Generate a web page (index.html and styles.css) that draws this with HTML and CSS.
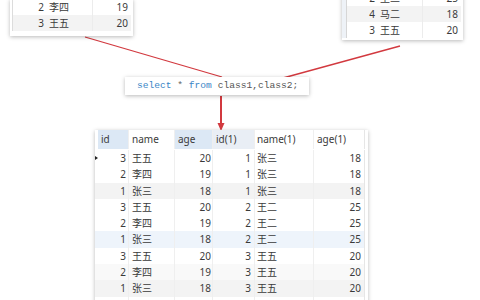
FILE: index.html
```html
<!DOCTYPE html>
<html lang="zh">
<head>
<meta charset="utf-8">
<title>class1, class2 cross join</title>
<link rel="stylesheet" href="styles.css">
</head>
<body>
<div class="canvas">
  <svg class="wires" width="480" height="300" viewBox="0 0 480 300">
    <line x1="85" y1="37" x2="222" y2="77" class="wire"/>
    <line x1="400" y1="46" x2="283" y2="78" class="wire"/>
    <line x1="221" y1="96" x2="221" y2="124" class="wire thick"/>
    <polygon points="217.5,123 224.5,123 221,131" class="head"/>
  </svg>

  <div class="card card-left">
    <div class="mini mini-left">
      <div class="m-row"><span class="c-id">2</span><span class="c-name">李四</span><span class="c-age">19</span></div>
      <div class="m-row alt"><span class="c-id">3</span><span class="c-name">王五</span><span class="c-age">20</span></div>
    </div>
  </div>

  <div class="card card-right">
    <div class="mini mini-right">
      <div class="m-row"><span class="strip"></span><span class="c-id">2</span><span class="c-name">王二</span><span class="c-age">25</span></div>
      <div class="m-row alt"><span class="strip"></span><span class="c-id">4</span><span class="c-name">马二</span><span class="c-age">18</span></div>
      <div class="m-row"><span class="strip"></span><span class="c-id">3</span><span class="c-name">王五</span><span class="c-age">20</span></div>
    </div>
  </div>

  <div class="sql"><span class="kw">select</span> <span class="op">*</span> <span class="kw">from</span> class1,class2;</div>

  <div class="card card-result">
    <div class="grid">
      <div class="g-row head-row">
        <span class="strip"></span>
        <span class="h h-sel">id</span>
        <span class="h">name</span>
        <span class="h h-sel">age</span>
        <span class="h h-soft">id(1)</span>
        <span class="h">name(1)</span>
        <span class="h">age(1)</span>
      </div>
      <div class="g-row"><span class="strip"><i class="ptr"></i></span><span class="num">3</span><span class="txt">王五</span><span class="num n-age">20</span><span class="num">1</span><span class="txt">张三</span><span class="num">18</span></div>
      <div class="g-row"><span class="strip"></span><span class="num">2</span><span class="txt">李四</span><span class="num n-age">19</span><span class="num">1</span><span class="txt">张三</span><span class="num">18</span></div>
      <div class="g-row alt"><span class="strip"></span><span class="num">1</span><span class="txt">张三</span><span class="num n-age">18</span><span class="num">1</span><span class="txt">张三</span><span class="num">18</span></div>
      <div class="g-row"><span class="strip"></span><span class="num">3</span><span class="txt">王五</span><span class="num n-age">20</span><span class="num">2</span><span class="txt">王二</span><span class="num">25</span></div>
      <div class="g-row"><span class="strip"></span><span class="num">2</span><span class="txt">李四</span><span class="num n-age">19</span><span class="num">2</span><span class="txt">王二</span><span class="num">25</span></div>
      <div class="g-row sel"><span class="strip"></span><span class="num">1</span><span class="txt">张三</span><span class="num n-age">18</span><span class="num">2</span><span class="txt">王二</span><span class="num">25</span></div>
      <div class="g-row"><span class="strip"></span><span class="num">3</span><span class="txt">王五</span><span class="num n-age">20</span><span class="num">3</span><span class="txt">王五</span><span class="num">20</span></div>
      <div class="g-row faint"><span class="strip"></span><span class="num">2</span><span class="txt">李四</span><span class="num n-age">19</span><span class="num">3</span><span class="txt">王五</span><span class="num">20</span></div>
      <div class="g-row alt"><span class="strip"></span><span class="num">1</span><span class="txt">张三</span><span class="num n-age">18</span><span class="num">3</span><span class="txt">王五</span><span class="num">20</span></div>
      <div class="g-row"><span class="strip"></span><span class="num"></span><span class="txt"></span><span class="num n-age"></span><span class="num"></span><span class="txt"></span><span class="num"></span></div>
    </div>
  </div>
</div>
</body>
</html>
```

FILE: styles.css
```css
* { box-sizing: border-box; }

html, body {
  margin: 0;
  padding: 0;
  background: #ffffff;
}

.canvas {
  position: relative;
  width: 480px;
  height: 300px;
  overflow: hidden;
  background: #ffffff;
  font-family: "Noto Sans", "Noto Sans CJK SC", sans-serif;
  font-size: 10px;
  color: #3a3a3a;
}

.wires {
  position: absolute;
  left: 0;
  top: 0;
}

.wire {
  stroke: #d2393f;
  stroke-width: 1.3;
}

.wire.thick {
  stroke-width: 2;
}

.head {
  fill: #d2393f;
}

.card {
  position: absolute;
  background: #ffffff;
  box-shadow: 0 1px 4px rgba(0, 0, 0, 0.28);
}

/* small source tables */
.card-left {
  left: 10px;
  top: -1px;
  width: 123px;
  padding: 0 2px 5px 2px;
}

.card-right {
  left: 342px;
  top: -10px;
  width: 121px;
  padding: 0 2px 2px 0;
}

.mini {
  display: flex;
  flex-direction: column;
}

.mini-left {
  border-left: 1px solid #dcdcdc;
}

.m-row {
  display: grid;
  height: 16px;
  line-height: 16px;
  white-space: nowrap;
}

.mini-left .m-row {
  grid-template-columns: 33px 47px 38px;
}

.mini-right .m-row {
  grid-template-columns: 5px 30px 46px 38px;
}

.m-row.alt {
  background: #f3f3f3;
}

.m-row .strip {
  background: #eef2f7;
  border-right: 1px solid #d6d6d6;
}

.c-id {
  text-align: right;
  padding-right: 2px;
}

.c-name {
  padding-left: 3px;
  border-right: 1px solid #ececec;
}

.c-age {
  text-align: right;
  padding-right: 3px;
}

/* sql statement */
.sql {
  position: absolute;
  left: 125px;
  top: 77px;
  width: 184px;
  height: 18px;
  line-height: 18px;
  padding-left: 12px;
  background: #ffffff;
  box-shadow: 0 1px 4px rgba(0, 0, 0, 0.28);
  font-family: "Liberation Mono", "DejaVu Sans Mono", monospace;
  font-size: 9.6px;
  color: #555555;
  white-space: pre;
}

.sql .kw {
  color: #3a85c6;
}

.sql .op {
  color: #666666;
}

/* result grid */
.card-result {
  left: 95px;
  top: 130px;
  width: 273px;
  padding-right: 3px;
}

.grid {
  display: flex;
  flex-direction: column;
}

.g-row {
  display: grid;
  grid-template-columns: 3px 31px 46px 38px 42px 59px 51px;
  height: 16.3px;
  line-height: 16.3px;
  white-space: nowrap;
}

.g-row > span {
  border-right: 1px solid #efefef;
  overflow: hidden;
}

.g-row > span:last-child {
  border-right: 1px solid #e6e6e6;
}

.g-row.head-row {
  height: 20px;
  line-height: 19px;
  padding-bottom: 1px;
}

.head-row .h {
  padding-left: 3px;
  background: #ffffff;
}

.head-row .h-sel {
  background: #dce8f5;
}

.head-row .h-soft {
  background: #e9eef5;
}

.g-row.alt {
  background: #f3f3f3;
}

.g-row.sel {
  background: #eef4fb;
}

.g-row.faint {
  background: #f9f9f9;
}

.g-row .strip {
  position: relative;
  border-right: none;
  overflow: visible;
}

.ptr {
  position: absolute;
  left: 0;
  top: 6px;
  width: 0;
  height: 0;
  border-top: 2.5px solid transparent;
  border-bottom: 2.5px solid transparent;
  border-left: 3px solid #222222;
}

.num {
  text-align: right;
  padding-right: 2px;
}

.g-row .n-age {
  padding-right: 1px;
}

.g-row > span:nth-child(5),
.g-row > span:nth-child(7) {
  padding-right: 3px;
}

.txt {
  padding-left: 3px;
}

.g-row > span:nth-child(6) {
  padding-left: 2px;
}
```
